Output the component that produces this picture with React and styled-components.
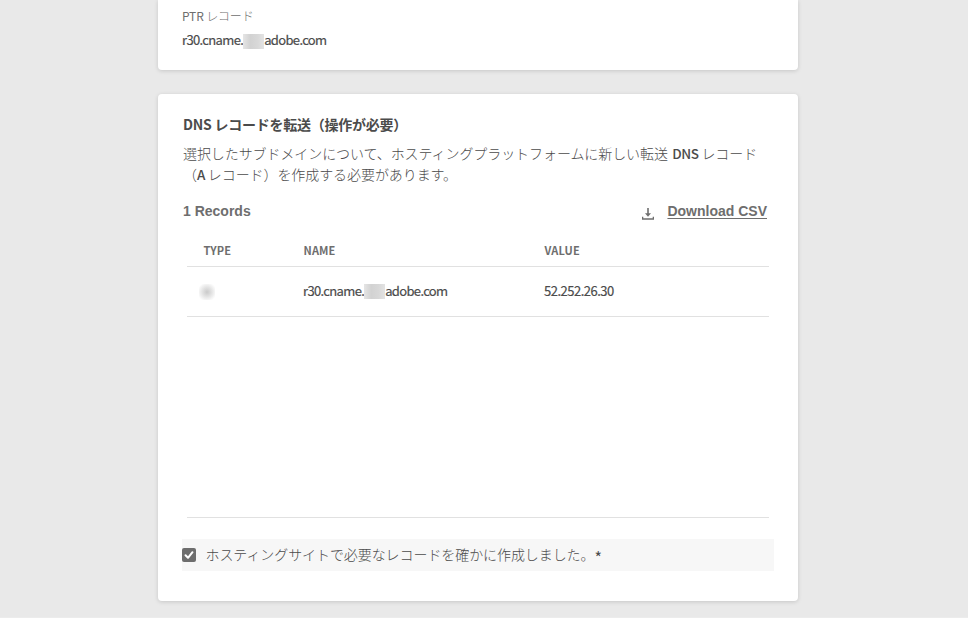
import React from "react";
import styled, { createGlobalStyle } from "styled-components";

const GlobalStyle = createGlobalStyle`
  * { box-sizing: border-box; }
  body { margin: 0; background: #e9e9e9; overflow: hidden; }
`;

const Page = styled.div`
  height: 618px;
  display: flex;
  flex-direction: column;
  align-items: center;
  gap: 24px;
  padding-right: 12px;
  background: #e9e9e9;
  border-bottom: 1px solid #ececec;
  color: #4b4b4b;
  font-family: "Noto Sans CJK JP", sans-serif;
  font-size: 14px;
  white-space: nowrap;
`;

const Card = styled.section`
  width: 640px;
  background: #fff;
  border-radius: 4px;
  box-shadow: 0 1px 4px rgba(0, 0, 0, 0.15);
`;

const SummaryCard = styled(Card)`
  height: 70px;
  flex: none;
  padding: 6px 24px 0;
  border-radius: 0 0 4px 4px;
`;

const RecordsCard = styled(Card)`
  height: 507px;
  flex: none;
  padding: 19px 24px 0;
`;

const FieldLabel = styled.div`
  height: 20px;
  color: #6e6e6e;
  font-size: 12px;
  font-weight: 300;
  line-height: 20px;
  letter-spacing: -0.15px;
`;

const LabelLatin = styled.span`
  font-weight: 400;
`;

const Host = styled.div`
  display: flex;
  align-items: center;
  margin-top: -2px;
  font-size: 13px;
  font-weight: 400;
  line-height: 20px;
  letter-spacing: -0.65px;
  -webkit-text-stroke: 0.2px #4b4b4b;
`;

const FieldValue = styled(Host)`
  margin-top: 4px;
`;

const Address = styled(Host)`
  letter-spacing: -0.5px;
`;

const Redacted = styled.span`
  width: 21px;
  height: 15px;
  margin-top: 2px;
  background: linear-gradient(90deg, #e5e5e5, #d2d2d2 35%, #d8d8d8 70%, #e3e3e3);
`;

const RedactedType = styled.span`
  display: block;
  width: 16px;
  height: 16px;
  margin-left: -4px;
  background: radial-gradient(circle, #cacaca 0%, #e2e2e2 40%, #fff 85%);
`;

const Title = styled.h2`
  margin: 0 0 0 1px;
  font-size: 14px;
  font-weight: 700;
  line-height: 22px;
  letter-spacing: -0.25px;
`;

const Description = styled.p`
  margin: 8px 0 0 1px;
  font-weight: 300;
  line-height: 21px;
  letter-spacing: -0.08px;
`;

const Latin = styled.span`
  margin-left: ${(p) => p.$shift || 0}px;
  font-size: 13.5px;
  font-weight: 500;
  letter-spacing: -0.5px;
`;

const Toolbar = styled.div`
  display: flex;
  justify-content: space-between;
  height: 20px;
  margin: 16px 7px 0 1px;
  color: #6e6e6e;
  font: 700 14px/20px "Liberation Sans", sans-serif;
`;

const Download = styled.a`
  display: flex;
  gap: 13px;
  color: #6e6e6e;
  svg { margin-top: 6px; }
  span { text-decoration: underline; text-underline-offset: 2px; }
`;

const Table = styled.div`
  width: 582px;
  height: 281px;
  margin: 16px 0 0 5px;
  border-bottom: 1px solid #e1e1e1;
`;

const Row = styled.div`
  display: grid;
  grid-template-columns: 100px 241px 1fr;
  align-items: center;
  height: ${(p) => (p.$head ? 30 : 50)}px;
  padding-left: 16px;
  border-bottom: 1px solid #e1e1e1;
`;

const HeadCell = styled.span`
  margin-top: -4px;
  padding-left: 0.5px;
  color: #6e6e6e;
  font-size: 11px;
  font-weight: 700;
  line-height: 16px;
  letter-spacing: 0.15px;
`;

const Confirmation = styled.label`
  display: flex;
  align-items: center;
  gap: 10px;
  width: 592px;
  height: 32px;
  margin-top: 21px;
  background: #f7f7f7;
  font-weight: 300;
  letter-spacing: -0.08px;
`;

const ConfirmationText = styled.span`
  margin: -2px 0 0 -0.5px;
`;

const Asterisk = styled.span`
  display: inline-block;
  font-size: 16px;
  font-weight: 400;
  line-height: 14px;
  transform: translateY(4px);
`;

const CheckBox = styled.span`
  display: flex;
  width: 14px;
  height: 14px;
  border-radius: 2px;
  background: #6e6e6e;
`;

function MaskedHost() {
  return (
    <>
      <span>r30.cname.</span>
      <Redacted />
      <span>adobe.com</span>
    </>
  );
}

export default function App() {
  return (
    <>
      <GlobalStyle />
      <Page>
        <SummaryCard>
          <FieldLabel><LabelLatin>PTR</LabelLatin> レコード</FieldLabel>
          <FieldValue><MaskedHost /></FieldValue>
        </SummaryCard>
        <RecordsCard>
          <Title>DNS レコードを転送（操作が必要）</Title>
          <Description>
            選択したサブドメインについて、ホスティングプラットフォームに新しい転送 <Latin $shift={1.5}>DNS</Latin> レコード<br />
            （<Latin>A</Latin> レコード）を作成する必要があります。
          </Description>
          <Toolbar>
            <span>1 Records</span>
            <Download>
              <svg width="12" height="13" viewBox="0 0 12 13" fill="none" stroke="#6e6e6e">
                <path d="M6 1V8" strokeWidth="1.6" />
                <path d="M3 6.3H9L6 9.8Z" fill="#6e6e6e" stroke="none" />
                <path d="M0.6 9.8V12H11.4V9.8" strokeWidth="1.4" />
              </svg>
              <span>Download CSV</span>
            </Download>
          </Toolbar>
          <Table>
            <Row $head>
              <HeadCell>TYPE</HeadCell>
              <HeadCell>NAME</HeadCell>
              <HeadCell>VALUE</HeadCell>
            </Row>
            <Row>
              <RedactedType />
              <Host><MaskedHost /></Host>
              <Address>52.252.26.30</Address>
            </Row>
          </Table>
          <Confirmation>
            <CheckBox>
              <svg width="14" height="14" viewBox="0 0 14 14" fill="none" stroke="#fff" strokeWidth="2" strokeLinecap="round" strokeLinejoin="round">
                <path d="M3.5 7.2L6 9.8L10.5 4.2" />
              </svg>
            </CheckBox>
            <ConfirmationText>ホスティングサイトで必要なレコードを確かに作成しました。<Asterisk>*</Asterisk></ConfirmationText>
          </Confirmation>
        </RecordsCard>
      </Page>
    </>
  );
}
